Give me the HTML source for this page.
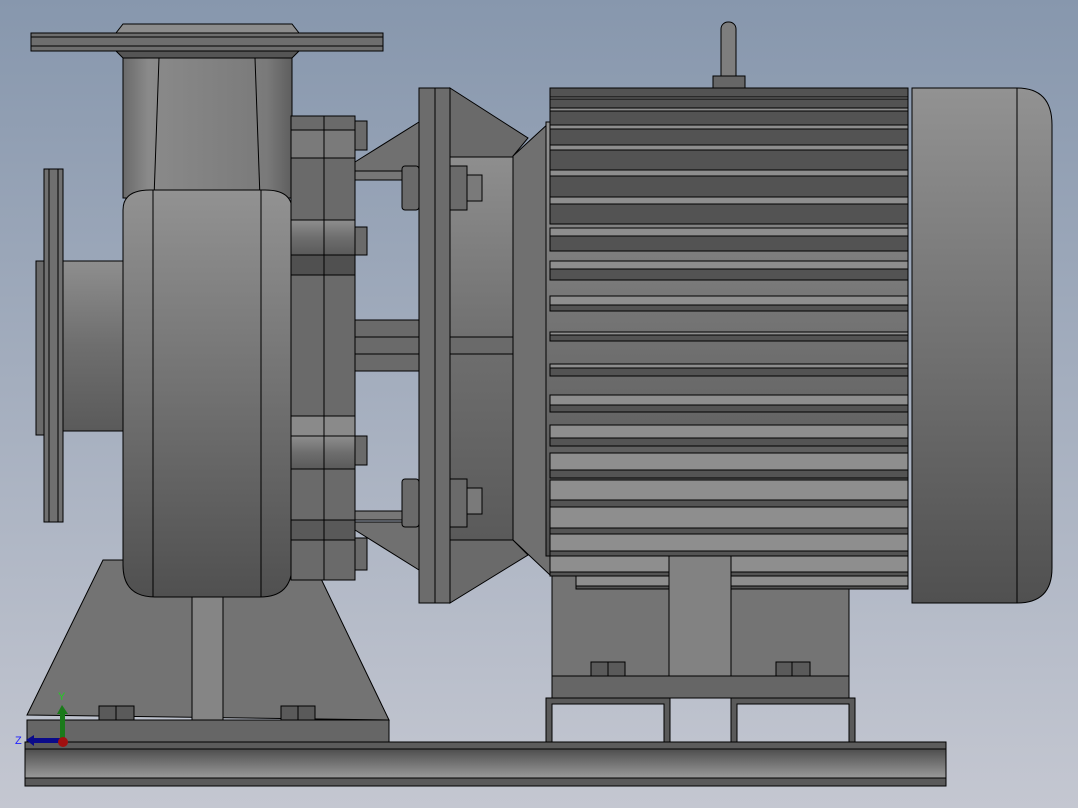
<!DOCTYPE html><html><head><style>html,body{margin:0;padding:0;width:1078px;height:808px;overflow:hidden}</style></head><body>
<svg width="1078" height="808" viewBox="0 0 1078 808" xmlns="http://www.w3.org/2000/svg" stroke="#000" stroke-width="1">
<defs>
<linearGradient id="bg" x1="0" y1="0" x2="0" y2="1"><stop offset="0" stop-color="#8797ad"/><stop offset="1" stop-color="#c4c7d1"/></linearGradient>
<linearGradient id="v" x1="0" y1="0" x2="0" y2="1"><stop offset="0" stop-color="#929292"/><stop offset="1" stop-color="#505050"/></linearGradient>
<linearGradient id="cyl" x1="0" y1="0" x2="1" y2="0"><stop offset="0" stop-color="#6a6a6a"/><stop offset=".15" stop-color="#8a8a8a"/><stop offset=".85" stop-color="#7a7a7a"/><stop offset="1" stop-color="#5e5e5e"/></linearGradient>
<linearGradient id="rail" x1="0" y1="0" x2="0" y2="1"><stop offset="0" stop-color="#4e4e4e"/><stop offset="1" stop-color="#9a9a9a"/></linearGradient>
<linearGradient id="pipe" x1="0" y1="0" x2="0" y2="1"><stop offset="0" stop-color="#8e8e8e"/><stop offset=".5" stop-color="#6e6e6e"/><stop offset="1" stop-color="#5a5a5a"/></linearGradient>
</defs>
<rect width="1078" height="808" fill="url(#bg)" stroke="none"/>
<!-- base rail -->
<rect x="25" y="742" width="921" height="7" fill="#5c5c5c"/>
<rect x="25" y="749" width="921" height="29" fill="url(#rail)"/>
<rect x="25" y="778" width="921" height="8" fill="#5a5a5a"/>
<!-- pump foot -->
<polygon points="103,560 312,560 389,720 27,715" fill="#737373"/>
<rect x="27" y="720" width="362" height="22" fill="#666"/>
<rect x="192" y="575" width="31" height="145" fill="#858585"/>
<rect x="99" y="706" width="17" height="14" fill="#5a5a5a"/><rect x="116" y="706" width="18" height="14" fill="#5a5a5a"/>
<rect x="281" y="706" width="17" height="14" fill="#5a5a5a"/><rect x="298" y="706" width="17" height="14" fill="#5a5a5a"/>
<!-- suction pipe & flange -->
<rect x="63" y="261" width="60" height="170" fill="url(#pipe)"/>
<rect x="36" y="261" width="27" height="174" fill="#6a6a6a"/>
<rect x="44" y="169" width="19" height="353" fill="#707070"/>
<line x1="49" y1="169" x2="49" y2="522"/><line x1="58" y1="169" x2="58" y2="522"/>
<!-- outlet neck -->
<rect x="123" y="58" width="169" height="140" fill="url(#cyl)"/>
<path d="M159,58 L154,198 M255,58 L260,198" fill="none"/>
<!-- top flange -->
<polygon points="123,24 292,24 299,33 116,33" fill="#8c8c8c"/>
<rect x="31" y="33" width="352" height="18" fill="#6e6e6e"/>
<line x1="31" y1="37" x2="383" y2="37"/><line x1="31" y1="46" x2="383" y2="46"/>
<polygon points="116,51 299,51 292,58 123,58" fill="#555"/>
<!-- volute body -->
<path d="M123,210 Q123,190 150,190 L265,190 Q292,190 292,210 L292,565 Q292,597 260,597 L155,597 Q123,597 123,565 Z" fill="url(#v)"/>
<line x1="153" y1="190" x2="153" y2="597"/><line x1="261" y1="190" x2="261" y2="597"/>
<!-- adapter -->
<rect x="291" y="116" width="64" height="464" fill="#6a6a6a"/>
<rect x="291" y="130" width="64" height="28" fill="#7a7a7a"/>
<rect x="291" y="220" width="64" height="35" fill="url(#pipe)"/>
<rect x="291" y="255" width="64" height="20" fill="#505050"/>
<rect x="291" y="416" width="64" height="20" fill="#8a8a8a"/>
<rect x="291" y="436" width="64" height="33" fill="url(#pipe)"/>
<rect x="291" y="520" width="64" height="20" fill="#595959"/>
<line x1="324" y1="116" x2="324" y2="580"/>
<rect x="355" y="121" width="12" height="29" fill="#6a6a6a"/><rect x="355" y="227" width="12" height="28" fill="#6a6a6a"/>
<rect x="355" y="436" width="12" height="29" fill="#6a6a6a"/><rect x="355" y="538" width="12" height="32" fill="#6a6a6a"/>
<!-- gussets -->
<polygon points="355,162 419,122 419,171 355,171" fill="#707070"/>
<polygon points="355,530 419,570 419,522 355,522" fill="#707070"/>
<rect x="355" y="171" width="47" height="9" fill="#777"/><rect x="355" y="511" width="47" height="9" fill="#777"/>
<rect x="355" y="320" width="64" height="51" fill="#6a6a6a"/><line x1="355" y1="337" x2="419" y2="337"/><line x1="355" y1="354" x2="419" y2="354"/>
<rect x="402" y="166" width="17" height="44" rx="3" fill="#6a6a6a"/><rect x="402" y="479" width="17" height="48" rx="3" fill="#6a6a6a"/>
<!-- motor flange / lantern -->
<polygon points="450,88 528,138 513,156 513,540 528,555 450,603" fill="#6a6a6a"/>
<rect x="450" y="157" width="63" height="383" fill="url(#pipe)"/>
<rect x="419" y="88" width="31" height="515" fill="#6c6c6c"/><line x1="435" y1="88" x2="435" y2="603"/>
<rect x="450" y="337" width="79" height="17" fill="#6a6a6a"/>
<rect x="450" y="166" width="17" height="44" fill="#6a6a6a"/><rect x="467" y="175" width="15" height="26" fill="#7a7a7a"/>
<rect x="450" y="479" width="17" height="48" fill="#6a6a6a"/><rect x="467" y="488" width="15" height="26" fill="#7a7a7a"/>
<polygon points="513,156 550,122 550,575 513,540" fill="#707070"/>
<!-- motor feet -->
<rect x="552" y="556" width="297" height="142" fill="#747474"/>
<rect x="552" y="676" width="297" height="22" fill="#666"/>
<rect x="669" y="556" width="62" height="120" fill="#828282"/>
<rect x="591" y="662" width="17" height="14" fill="#5a5a5a"/><rect x="608" y="662" width="17" height="14" fill="#5a5a5a"/>
<rect x="776" y="662" width="16" height="14" fill="#5a5a5a"/><rect x="792" y="662" width="18" height="14" fill="#5a5a5a"/>
<path d="M546,742 V698 H670 V742 H664 V704 H552 V742 Z" fill="#5a5a5a"/>
<path d="M731,742 V698 H855 V742 H849 V704 H737 V742 Z" fill="#5a5a5a"/>
<!-- motor body -->
<rect x="546" y="122" width="362" height="434" fill="url(#v)"/>
<g fill="#535353">
<rect x="550" y="88" width="358" height="9"/>
<rect x="550" y="99" width="358" height="9"/>
<rect x="550" y="111" width="358" height="14"/>
<rect x="550" y="129" width="358" height="16"/>
<rect x="550" y="150" width="358" height="20"/>
<rect x="550" y="176" width="358" height="21"/>
<rect x="550" y="204" width="358" height="20"/>
<rect x="550" y="236" width="358" height="15"/>
<rect x="550" y="269" width="358" height="11"/>
<rect x="550" y="305" width="358" height="6"/>
<rect x="550" y="335" width="358" height="6"/>
<rect x="550" y="368" width="358" height="8"/>
</g>
<g fill="#8e8e8e">
<rect x="550" y="97" width="358" height="2"/><rect x="550" y="108" width="358" height="3"/><rect x="550" y="125" width="358" height="4"/>
<rect x="550" y="145" width="358" height="5"/><rect x="550" y="170" width="358" height="6"/><rect x="550" y="197" width="358" height="7"/>
<rect x="550" y="228" width="358" height="8"/><rect x="550" y="261" width="358" height="8"/><rect x="550" y="296" width="358" height="9"/>
<rect x="550" y="332" width="358" height="3"/><rect x="550" y="364" width="358" height="4"/>
<rect x="550" y="395" width="358" height="10"/><rect x="550" y="425" width="358" height="13"/><rect x="550" y="453" width="358" height="17"/>
<rect x="550" y="480" width="358" height="20"/><rect x="550" y="507" width="358" height="21"/><rect x="550" y="534" width="358" height="17"/>
<rect x="550" y="556" width="358" height="16"/><rect x="576" y="576" width="332" height="10"/>
</g>
<g fill="#545454">
<rect x="550" y="405" width="358" height="7"/><rect x="550" y="438" width="358" height="8"/><rect x="550" y="470" width="358" height="8"/>
<rect x="550" y="500" width="358" height="7"/><rect x="550" y="528" width="358" height="6"/><rect x="550" y="551" width="358" height="5"/>
<rect x="550" y="572" width="358" height="4"/><rect x="576" y="586" width="332" height="3"/>
</g>
<rect x="669" y="556" width="62" height="120" fill="#828282"/>
<!-- end cap -->
<path d="M912,88 L1017,88 Q1052,88 1052,125 L1052,568 Q1052,603 1017,603 L912,603 Z" fill="url(#v)"/>
<line x1="1017" y1="88" x2="1017" y2="603"/>
<!-- lifting eye -->
<rect x="721" y="22" width="15" height="62" rx="7" fill="#7e7e7e"/>
<rect x="713" y="76" width="32" height="12" fill="#666"/>
<!-- triad -->
<g stroke="none">
<rect x="60" y="712" width="5" height="28" fill="#1a7a1a"/><polygon points="57,714 62,705 68,714" fill="#1a7a1a"/>
<rect x="32" y="738" width="28" height="5" fill="#0a0a8a"/><polygon points="34,735 26,740 34,746" fill="#0a0a8a"/>
<circle cx="63" cy="742" r="5" fill="#a01010"/>
<text x="58" y="700" font-family="Liberation Sans, sans-serif" font-size="11" fill="#2c2">Y</text>
<text x="15" y="744" font-family="Liberation Sans, sans-serif" font-size="11" fill="#22f">Z</text>
</g>
</svg>
</body></html>
